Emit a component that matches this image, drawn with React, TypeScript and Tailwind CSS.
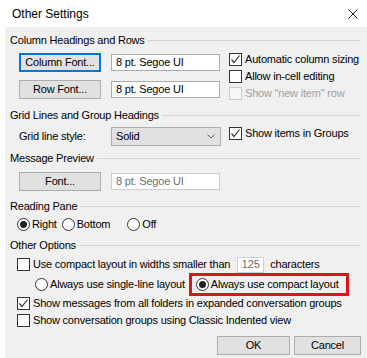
import type { ReactNode } from 'react'

const FONT = "font-['Liberation_Sans',Arial,sans-serif]"

function Header({ children }: { children: ReactNode }) {
  return (
    <div className="flex items-center h-[18px] gap-[3px]">
      <span className="text-black whitespace-nowrap">{children}</span>
      <div className="flex-1 border-t border-[#d5d5d5] mt-[1px]" />
    </div>
  )
}

function CheckBox({ checked = false, disabled = false }: { checked?: boolean; disabled?: boolean }) {
  return (
    <div
      className={`w-[13px] h-[13px] shrink-0 border flex items-center justify-center ${
        disabled ? 'border-[#cccccc] bg-[#f7f7f7]' : 'border-[#333333] bg-white'
      }`}
    >
      {checked && (
        <svg width="11" height="11" viewBox="0 0 11 11">
          <path d="M1.5 5.5 L4 8.5 L9.5 1.5" fill="none" stroke="#333" strokeWidth="1.2" />
        </svg>
      )}
    </div>
  )
}

function Radio({ checked = false }: { checked?: boolean }) {
  return (
    <div className="w-[13px] h-[13px] shrink-0 rounded-full border border-[#333333] bg-white flex items-center justify-center">
      {checked && <div className="w-[7px] h-[7px] rounded-full bg-[#222]" />}
    </div>
  )
}

function Check({ label, checked, disabled }: { label: string; checked?: boolean; disabled?: boolean }) {
  return (
    <div className="flex items-center h-[17px] gap-[3px]">
      <CheckBox checked={checked} disabled={disabled} />
      <span className={`whitespace-nowrap ${disabled ? 'text-[#a0a0a0]' : 'text-black'}`}>{label}</span>
    </div>
  )
}

function Button({ label, focused, className = '' }: { label: string; focused?: boolean; className?: string }) {
  return (
    <div
      className={`h-[19px] flex items-center justify-center whitespace-nowrap bg-[#e1e1e1] ${
        focused ? 'border-2 border-[#0078d7]' : 'border border-[#adadad]'
      } ${className}`}
    >
      {label}
    </div>
  )
}

function TextBox({ value, dim }: { value: string; dim?: boolean }) {
  return (
    <div
      className={`w-[109px] h-[17px] bg-white border flex items-center px-[4px] whitespace-nowrap ${
        dim ? 'border-[#cccccc] text-[#6d6d6d]' : 'border-[#ababab] text-black'
      }`}
    >
      {value}
    </div>
  )
}

export default function App() {
  return (
    <div className={`w-[367px] h-[358px] bg-white flex flex-col text-[11px] tracking-[-0.2px] leading-none ${FONT}`}>
      {/* TITLE BAR */}
      <div className="h-[27px] flex items-center justify-between pl-[12px] pr-[9px] shrink-0">
        <span className="text-black text-[12px] tracking-normal">Other Settings</span>
        <svg width="10" height="10" viewBox="0 0 10 10">
          <path d="M0.5 0.5 L9.5 9.5 M9.5 0.5 L0.5 9.5" stroke="#222" strokeWidth="1" />
        </svg>
      </div>

      {/* BODY */}
      <div className="flex-1 ml-[5px] bg-[#f0f0f0] pl-[5px] pr-[6px] pt-[4px] flex flex-col">
        <Header>Column Headings and Rows</Header>
        <div className="flex pl-[9px] h-[53px]">
          <div className="flex flex-col gap-[8px] pt-[4px]">
            <div className="flex items-center gap-[10px]">
              <Button label="Column Font..." focused className="w-[82px]" />
              <TextBox value="8 pt. Segoe UI" />
            </div>
            <div className="flex items-center gap-[10px]">
              <Button label="Row Font..." className="w-[82px]" />
              <TextBox value="8 pt. Segoe UI" />
            </div>
          </div>
          <div className="flex flex-col ml-[9px] pt-[2px]">
            <Check label="Automatic column sizing" checked />
            <Check label="Allow in-cell editing" />
            <Check label={'Show "new item" row'} disabled />
          </div>
        </div>

        <div className="mt-[4px]">
          <Header>Grid Lines and Group Headings</Header>
        </div>
        <div className="flex items-start pl-[9px] h-[25px]">
          <div className="flex items-center mt-[3px]">
            <span className="w-[92px]">Grid line style:</span>
            <div className="w-[110px] h-[19px] bg-[#e1e1e1] border border-[#adadad] flex items-center justify-between pl-[4px] pr-[5px]">
              <span>Solid</span>
              <svg width="8" height="5" viewBox="0 0 8 5">
                <path d="M0.5 0.5 L4 4 L7.5 0.5" fill="none" stroke="#606060" strokeWidth="1" />
              </svg>
            </div>
          </div>
          <div className="ml-[8px] mt-[1px]">
            <Check label="Show items in Groups" checked />
          </div>
        </div>

        <Header>Message Preview</Header>
        <div className="flex items-center gap-[10px] pl-[9px] pt-[5px] pb-[6px]">
          <Button label="Font..." className="w-[82px]" />
          <TextBox value="8 pt. Segoe UI" dim />
        </div>

        <Header>Reading Pane</Header>
        <div className="flex items-center h-[18px] pl-[7px]">
          <Radio checked />
          <span className="ml-[2px]">Right</span>
          <div className="ml-[5px]"><Radio /></div>
          <span className="ml-[2px]">Bottom</span>
          <div className="ml-[17px]"><Radio /></div>
          <span className="ml-[2px]">Off</span>
        </div>

        <div className="mt-[3px]">
          <Header>Other Options</Header>
        </div>
        <div className="flex items-center h-[17px] pl-[7px] mt-[2px]">
          <CheckBox />
          <span className="ml-[3px] whitespace-nowrap">Use compact layout in widths smaller than</span>
          <div className="ml-[7px] w-[27px] h-[16px] bg-white border border-[#c3d4e6] text-[#6d6d6d] flex items-center justify-center">
            125
          </div>
          <span className="ml-[6px]">characters</span>
        </div>
        <div className="flex items-center h-[22px] pl-[25px]">
          <Radio />
          <span className="ml-[2px] whitespace-nowrap">Always use single-line layout</span>
          <div className="ml-[4px] h-[23px] shrink-0 border-[3px] border-[#e3101e] flex items-center pl-[4px] pr-[7px]">
            <Radio checked />
            <span className="ml-[2px] whitespace-nowrap">Always use compact layout</span>
          </div>
        </div>
        <div className="pl-[7px]">
          <Check label="Show messages from all folders in expanded conversation groups" checked />
          <Check label="Show conversation groups using Classic Indented view" />
        </div>

        <div className="flex justify-end gap-[4px] mt-[7px]">
          <Button label="OK" className="w-[73px]" />
          <Button label="Cancel" className="w-[67px]" />
        </div>
      </div>
    </div>
  )
}
